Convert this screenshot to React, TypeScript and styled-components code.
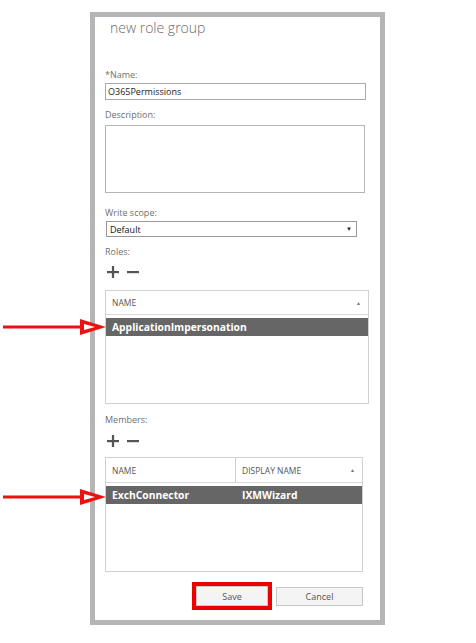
import styled, { createGlobalStyle } from 'styled-components';

const GlobalStyle = createGlobalStyle`
  html, body {
    margin: 0;
    padding: 0;
    background: #fff;
  }
  body {
    font-family: 'Open Sans', 'Noto Sans', 'Liberation Sans', sans-serif;
  }
`;

const ArrowMark = ({ top }: { top: number }) => (
  <ArrowSvg style={{ top }} width='108' height='18' viewBox='0 0 108 18'>
    <rect x='3' y='7.5' width='80' height='3' fill='#ee1111' />
    <polygon points='80,1 106,9 80,17' fill='#ee1111' />
    <polygon points='84,6 95,9 84,12' fill='#fff' />
  </ArrowSvg>
);

const PlusMinus = () => (
  <IconRow>
    <svg width='12' height='12' viewBox='0 0 12 12'>
      <rect x='0' y='5' width='12' height='2.2' fill='#555' />
      <rect x='4.9' y='0' width='2.2' height='12' fill='#555' />
    </svg>
    <svg width='12' height='12' viewBox='0 0 12 12'>
      <rect x='0' y='5' width='12' height='2.2' fill='#555' />
    </svg>
  </IconRow>
);

const App = () => {
  return (
    <Page>
      <GlobalStyle />
      <Frame>
        <Title>new role group</Title>
        <Label $top={30}>*Name:</Label>
        <TextInput>O365Permissions</TextInput>
        <Label $top={9}>Description:</Label>
        <TextArea />
        <Label $top={14}>Write scope:</Label>
        <Select>
          <span>Default</span>
          <DropArrow>▼</DropArrow>
        </Select>
        <Label $top={9}>Roles:</Label>
        <IconSlot $top={7}>
          <PlusMinus />
        </IconSlot>
        <Table $top={11} $width={264} $height={114}>
          <HeaderRow $height={24}>
            <HeaderCell $grow>NAME</HeaderCell>
            <SortMark>▲</SortMark>
          </HeaderRow>
          <SelectedRow $height={18}>
            <Cell>ApplicationImpersonation</Cell>
          </SelectedRow>
        </Table>
        <Label $top={10}>Members:</Label>
        <IconSlot $top={8}>
          <PlusMinus />
        </IconSlot>
        <Table $top={9} $width={258} $height={115}>
          <HeaderRow $height={25}>
            <HeaderCell $width={130} $divider>NAME</HeaderCell>
            <HeaderCell $grow>DISPLAY NAME</HeaderCell>
            <SortMark>▲</SortMark>
          </HeaderRow>
          <SelectedRow $height={18}>
            <Cell $width={130}>ExchConnector</Cell>
            <Cell>IXMWizard</Cell>
          </SelectedRow>
        </Table>
        <ButtonRow>
          <Highlight>
            <Button $width={72} $height={20}>Save</Button>
          </Highlight>
          <Button $width={87} $height={19}>Cancel</Button>
        </ButtonRow>
      </Frame>
      <ArrowMark top={318} />
      <ArrowMark top={488} />
    </Page>
  );
};

export default App;

const Page = styled.div`
  position: relative;
  width: 476px;
  height: 643px;
  padding-top: 12px;
  box-sizing: border-box;
`;

const Frame = styled.div`
  margin-left: 90px;
  width: 295px;
  height: 613px;
  box-sizing: border-box;
  border: 5px solid #b5b5b5;
  padding: 0 0 0 10px;
  display: flex;
  flex-direction: column;
  align-items: flex-start;
  background: #fff;
`;

const Title = styled.div`
  height: 22px;
  line-height: 22px;
  padding-left: 5px;
  font-size: 14px;
  font-weight: 300;
  color: #6a6a6a;
`;

const Label = styled.div<{ $top: number }>`
  margin-top: ${(p) => p.$top}px;
  height: 12px;
  line-height: 12px;
  font-size: 9px;
  color: #6f6f6f;
`;

const TextInput = styled.div`
  margin-top: 2px;
  width: 261px;
  height: 17px;
  box-sizing: border-box;
  border: 1px solid #aaa;
  padding-left: 2px;
  line-height: 15px;
  font-size: 9px;
  color: #222;
`;

const TextArea = styled.div`
  margin-top: 4px;
  width: 260px;
  height: 68px;
  box-sizing: border-box;
  border: 1px solid #b5b5b5;
`;

const Select = styled.div`
  margin: 2px 0 0 1px;
  width: 251px;
  height: 16px;
  box-sizing: border-box;
  border: 1px solid #999;
  padding: 0 4px 0 3px;
  display: flex;
  align-items: center;
  justify-content: space-between;
  font-size: 9px;
  color: #111;
`;

const DropArrow = styled.span`
  font-size: 6px;
  color: #222;
`;

const IconSlot = styled.div<{ $top: number }>`
  margin: ${(p) => p.$top}px 0 0 2px;
  height: 14px;
  display: flex;
  align-items: center;
`;

const IconRow = styled.div`
  display: flex;
  gap: 8px;
`;

const Table = styled.div<{ $top: number; $width: number; $height: number }>`
  margin-top: ${(p) => p.$top}px;
  width: ${(p) => p.$width}px;
  height: ${(p) => p.$height}px;
  box-sizing: border-box;
  border: 1px solid #d0d0d0;
  display: flex;
  flex-direction: column;
`;

const HeaderRow = styled.div<{ $height: number }>`
  height: ${(p) => p.$height}px;
  box-sizing: border-box;
  border-bottom: 1px solid #d8d8d8;
  margin-bottom: 3px;
  display: flex;
  align-items: stretch;
`;

const HeaderCell = styled.div<{ $width?: number; $grow?: boolean; $divider?: boolean }>`
  ${(p) => (p.$width ? `width: ${p.$width}px;` : '')}
  ${(p) => (p.$grow ? 'flex: 1;' : '')}
  ${(p) => (p.$divider ? 'border-right: 1px solid #d0d0d0;' : '')}
  box-sizing: border-box;
  padding-left: 6px;
  display: flex;
  align-items: center;
  font-size: 8.5px;
  color: #555;
`;

const SortMark = styled.div`
  width: 12px;
  display: flex;
  align-items: center;
  font-size: 5px;
  color: #777;
`;

const SelectedRow = styled.div<{ $height: number }>`
  height: ${(p) => p.$height}px;
  background: #666;
  display: flex;
  align-items: center;
`;

const Cell = styled.div<{ $width?: number }>`
  ${(p) => (p.$width ? `width: ${p.$width}px;` : 'flex: 1;')}
  padding-left: 6px;
  box-sizing: border-box;
  font-size: 10.3px;
  font-weight: 700;
  color: #fff;
`;

const ButtonRow = styled.div`
  margin-top: 10px;
  width: 258px;
  display: flex;
  justify-content: flex-end;
  align-items: center;
  gap: 4px;
`;

const Highlight = styled.div`
  border: 4px solid #ee0000;
  display: flex;
`;

const Button = styled.div<{ $width: number; $height: number }>`
  width: ${(p) => p.$width}px;
  height: ${(p) => p.$height}px;
  box-sizing: border-box;
  border: 1px solid #c8c8c8;
  background: #f4f4f4;
  display: flex;
  align-items: center;
  justify-content: center;
  font-size: 9px;
  color: #555;
`;

const ArrowSvg = styled.svg`
  position: absolute;
  left: 0;
`;
